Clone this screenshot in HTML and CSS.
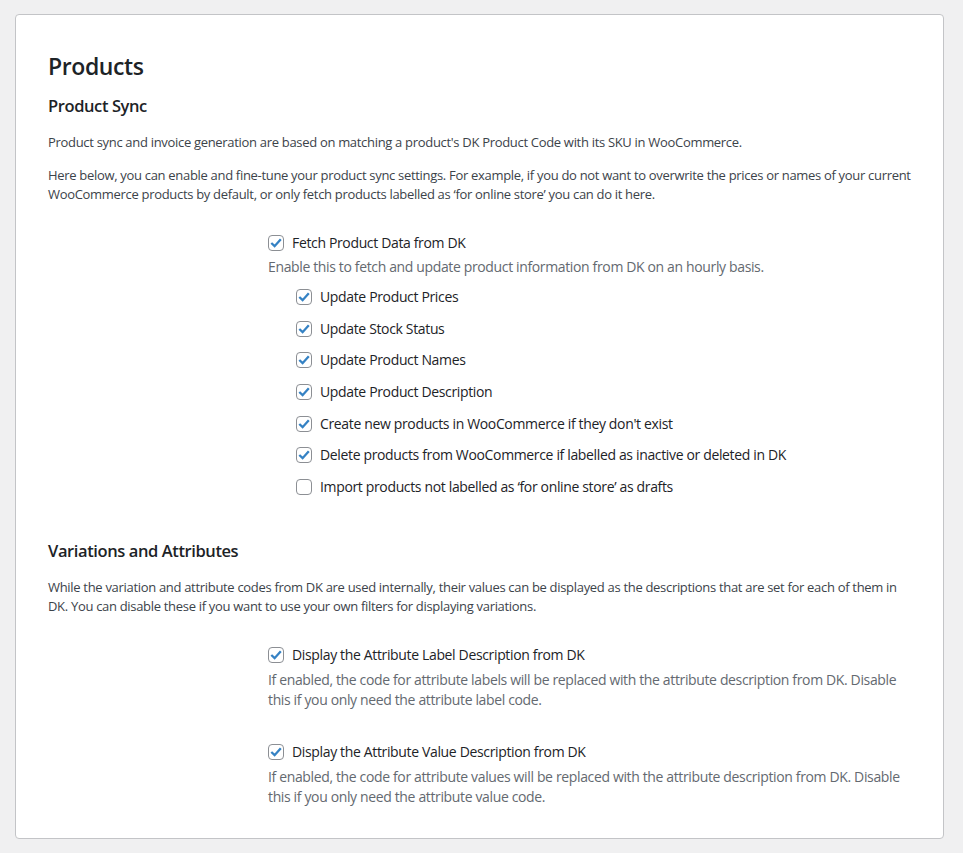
FILE: index.html
```html
<!DOCTYPE html>
<html lang="en">
<head>
<meta charset="utf-8">
<title>Products</title>
<link rel="stylesheet" href="styles.css">
</head>
<body>
<div class="page">
  <div class="panel">
    <h1 class="title">Products</h1>
    <h2 class="section">Product Sync</h2>
    <p class="text">Product sync and invoice generation are based on matching a product's DK Product Code with its SKU in WooCommerce.</p>
    <p class="text">Here below, you can enable and fine-tune your product sync settings. For example, if you do not want to overwrite the prices or names of your current WooCommerce products by default, or only fetch products labelled as ‘for online store’ you can do it here.</p>

    <div class="form-row first-form">
      <div class="th"></div>
      <div class="td">
        <label class="opt"><span class="cb"><svg viewBox="0 0 14 14" width="14" height="14"><polyline points="2.3,7 5.6,10.2 11.8,3.2" fill="none" stroke="#3582c4" stroke-width="2.3"/></svg></span>Fetch Product Data from DK</label>
        <p class="desc">Enable this to fetch and update product information from DK on an hourly basis.</p>
        <div class="sub">
          <label class="opt row"><span class="cb"><svg viewBox="0 0 14 14" width="14" height="14"><polyline points="2.3,7 5.6,10.2 11.8,3.2" fill="none" stroke="#3582c4" stroke-width="2.3"/></svg></span>Update Product Prices</label>
          <label class="opt row"><span class="cb"><svg viewBox="0 0 14 14" width="14" height="14"><polyline points="2.3,7 5.6,10.2 11.8,3.2" fill="none" stroke="#3582c4" stroke-width="2.3"/></svg></span>Update Stock Status</label>
          <label class="opt row"><span class="cb"><svg viewBox="0 0 14 14" width="14" height="14"><polyline points="2.3,7 5.6,10.2 11.8,3.2" fill="none" stroke="#3582c4" stroke-width="2.3"/></svg></span>Update Product Names</label>
          <label class="opt row"><span class="cb"><svg viewBox="0 0 14 14" width="14" height="14"><polyline points="2.3,7 5.6,10.2 11.8,3.2" fill="none" stroke="#3582c4" stroke-width="2.3"/></svg></span>Update Product Description</label>
          <label class="opt row"><span class="cb"><svg viewBox="0 0 14 14" width="14" height="14"><polyline points="2.3,7 5.6,10.2 11.8,3.2" fill="none" stroke="#3582c4" stroke-width="2.3"/></svg></span>Create new products in WooCommerce if they don't exist</label>
          <label class="opt row"><span class="cb"><svg viewBox="0 0 14 14" width="14" height="14"><polyline points="2.3,7 5.6,10.2 11.8,3.2" fill="none" stroke="#3582c4" stroke-width="2.3"/></svg></span>Delete products from WooCommerce if labelled as inactive or deleted in DK</label>
          <label class="opt row"><span class="cb"></span>Import products not labelled as ‘for online store’ as drafts</label>
        </div>
      </div>
    </div>

    <h2 class="section second">Variations and Attributes</h2>
    <p class="text">While the variation and attribute codes from DK are used internally, their values can be displayed as the descriptions that are set for each of them in DK. You can disable these if you want to use your own filters for displaying variations.</p>

    <div class="form-row second-form">
      <div class="th"></div>
      <div class="td">
        <label class="opt"><span class="cb"><svg viewBox="0 0 14 14" width="14" height="14"><polyline points="2.3,7 5.6,10.2 11.8,3.2" fill="none" stroke="#3582c4" stroke-width="2.3"/></svg></span>Display the Attribute Label Description from DK</label>
        <p class="desc attr">If enabled, the code for attribute labels will be replaced with the attribute description from DK. Disable this if you only need the attribute label code.</p>
      </div>
    </div>
    <div class="form-row third-form">
      <div class="th"></div>
      <div class="td">
        <label class="opt"><span class="cb"><svg viewBox="0 0 14 14" width="14" height="14"><polyline points="2.3,7 5.6,10.2 11.8,3.2" fill="none" stroke="#3582c4" stroke-width="2.3"/></svg></span>Display the Attribute Value Description from DK</label>
        <p class="desc attr">If enabled, the code for attribute values will be replaced with the attribute description from DK. Disable this if you only need the attribute value code.</p>
      </div>
    </div>
  </div>
</div>
</body>
</html>
```

FILE: styles.css
```css
html, body {
  margin: 0;
  padding: 0;
  background: #f0f0f1;
}
body {
  font-family: "Open Sans", "Noto Sans", sans-serif;
  color: #1d2327;
}
.page {
  padding: 14px 19px 14px 15px;
}
.panel {
  background: #fff;
  border: 1px solid #c3c4c7;
  border-radius: 4px;
  padding: 36px 28px 0 32px;
  box-sizing: border-box;
  height: 825px;
}
.title {
  margin: 0 0 13px;
  font-size: 23px;
  line-height: 30px;
  font-weight: 600;
  letter-spacing: -0.4px;
  color: #1d2327;
}
.section {
  margin: 0 0 15px;
  font-size: 16.5px;
  line-height: 24px;
  font-weight: 600;
  letter-spacing: -0.4px;
  color: #1d2327;
}
.section.second {
  margin-top: 21px;
  margin-bottom: 15.5px;
}
.text {
  margin: 0 0 14px;
  font-size: 13px;
  line-height: 19px;
  color: #3c434a;
  letter-spacing: -0.31px;
}
.form-row {
  display: grid;
  grid-template-columns: 220px 1fr;
  padding: 15px 0;
}
.first-form { margin-top: 3px; }
.second-form { margin-top: 2px; }
.third-form { margin-top: 2px; }
.opt {
  display: flex;
  align-items: center;
  height: 20px;
  font-size: 14px;
  line-height: 20px;
  color: #1d2327;
  letter-spacing: -0.35px;
}
.cb {
  flex: none;
  width: 16px;
  height: 16px;
  box-sizing: border-box;
  border: 1px solid #8c8f94;
  border-radius: 4px;
  background: #fff;
  margin-right: 8px;
  display: flex;
  align-items: center;
  justify-content: center;
}
.cb svg {
  flex: none;
  display: block;
}
.desc {
  margin: 4px 0 0;
  font-size: 14px;
  line-height: 20px;
  color: #646970;
  letter-spacing: -0.36px;
}
.desc.attr {
  margin-top: 4.7px;
}
.sub {
  margin-top: 4.2px;
  padding-left: 28px;
}
.opt.row {
  height: 31.67px;
}
```
